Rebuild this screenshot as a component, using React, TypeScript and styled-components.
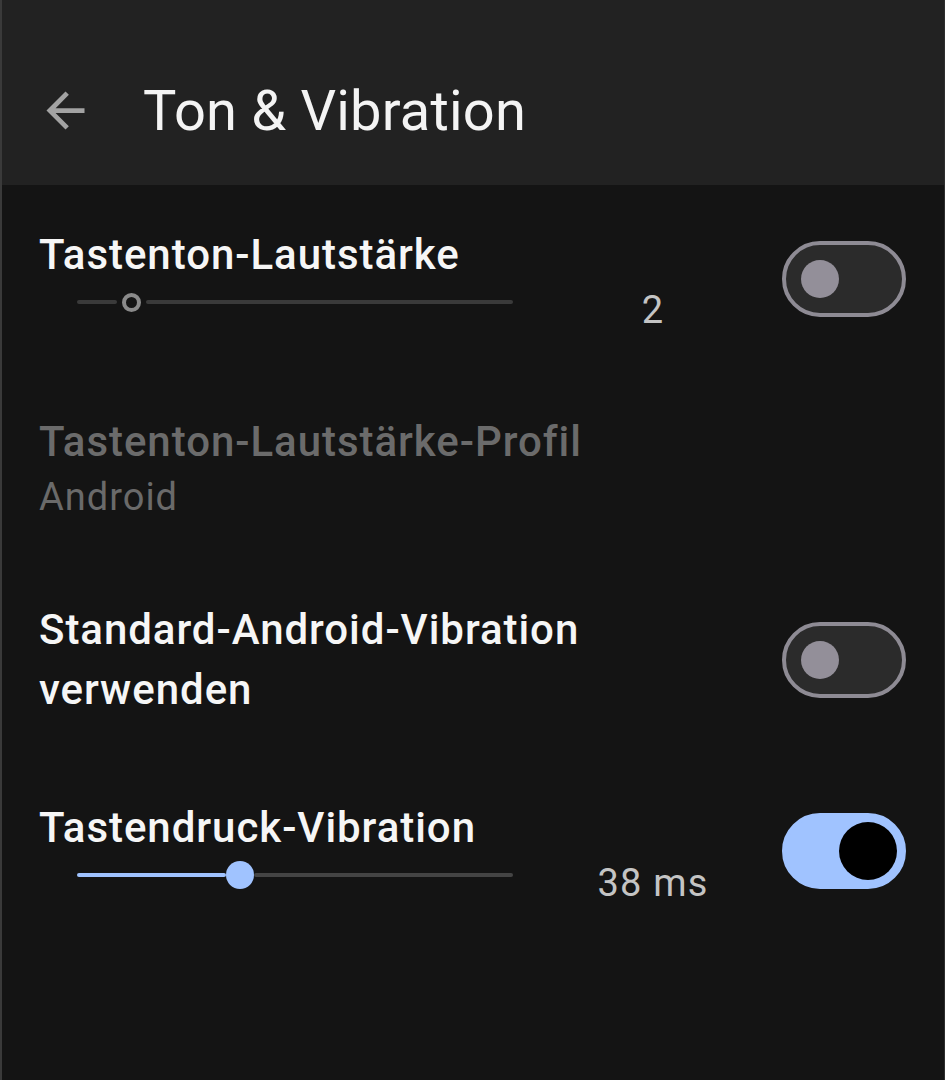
import React from 'react';
import styled, { createGlobalStyle } from 'styled-components';

const GlobalStyle = createGlobalStyle`
  html, body {
    margin: 0;
    padding: 0;
    background: #141414;
  }
  * {
    box-sizing: border-box;
  }
`;

const Screen = styled.div`
  width: 945px;
  height: 1080px;
  background: #141414;
  border-left: 2px solid #3a3a3a;
  border-right: 1px solid #2e2e2e;
  font-family: Roboto, 'Noto Sans', sans-serif;
  overflow: hidden;
`;

const Header = styled.header`
  height: 185px;
  background: #222222;
  display: flex;
  align-items: center;
  padding: 36px 0 0 35px;
  gap: 49px;
`;

const BackIcon = styled.svg`
  width: 57px;
  height: 57px;
  fill: #a3a3a3;
  flex-shrink: 0;
`;

const Title = styled.h1`
  margin: 0;
  font-size: 56px;
  font-weight: 400;
  color: #f4f4f4;
  letter-spacing: 0.2px;
`;

const List = styled.div`
  display: flex;
  flex-direction: column;
  gap: 78px;
  padding-top: 40px;
`;

const Row = styled.div<{ $center?: boolean }>`
  display: flex;
  align-items: ${p => (p.$center ? 'center' : 'flex-start')};
  padding: 0 38px 0 37px;
`;

const Body = styled.div`
  flex: 1;
  display: flex;
  flex-direction: column;
`;

const ItemTitle = styled.div<{ $disabled?: boolean }>`
  font-size: 42px;
  line-height: 60px;
  font-weight: 500;
  letter-spacing: 0.95px;
  color: ${p => (p.$disabled ? '#6b6b6b' : '#f6f6f6')};
`;

const Summary = styled.div`
  font-size: 38px;
  line-height: 50px;
  letter-spacing: 1px;
  color: #6a6a6a;
`;

const SliderRow = styled.div`
  display: flex;
  align-items: flex-start;
`;

const Track = styled.div`
  width: 436px;
  height: 34px;
  margin-left: 38px;
  display: flex;
  align-items: center;
`;

const Segment = styled.div<{ $color: string; $width?: number }>`
  height: 4px;
  border-radius: 2px;
  background: ${p => p.$color};
  ${p => (p.$width !== undefined ? `width: ${p.$width}px; flex-shrink: 0;` : 'flex: 1;')}
`;

const RingThumb = styled.div`
  width: 19px;
  height: 19px;
  border-radius: 50%;
  border: 4px solid #8a8a8a;
  margin: 0 5px;
  flex-shrink: 0;
`;

const DotThumb = styled.div`
  width: 28px;
  height: 28px;
  border-radius: 50%;
  background: #a0c3ff;
  flex-shrink: 0;
`;

const Value = styled.div`
  width: 140px;
  margin-left: 70px;
  margin-top: 1px;
  text-align: center;
  font-size: 38px;
  line-height: 48px;
  letter-spacing: 1.2px;
  color: #c4c4c4;
`;

const Switch = styled.div<{ $on?: boolean }>`
  width: 124px;
  height: 76px;
  border-radius: 38px;
  flex-shrink: 0;
  margin-top: ${p => (p.$on ? '15px' : '16px')};
  display: flex;
  align-items: center;
  justify-content: ${p => (p.$on ? 'flex-end' : 'flex-start')};
  padding: ${p => (p.$on ? '0 5px 0 0' : '0 0 0 15px')};
  background: ${p => (p.$on ? '#a0c3ff' : '#2b2b2b')};
  border: 4px solid ${p => (p.$on ? '#a0c3ff' : '#8e8b94')};
`;

const SwitchSlot = styled(Switch)`
  margin-top: 0;
`;

const Knob = styled.div<{ $on?: boolean }>`
  width: ${p => (p.$on ? '58px' : '38px')};
  height: ${p => (p.$on ? '58px' : '38px')};
  border-radius: 50%;
  background: ${p => (p.$on ? '#000000' : '#938f99')};
`;

export default function App() {
  return (
    <Screen>
      <GlobalStyle />
      <Header>
        <BackIcon viewBox="0 0 24 24">
          <path d="M20 11H7.83l5.59-5.59L12 4l-8 8 8 8 1.41-1.41L7.83 13H20v-2z" />
        </BackIcon>
        <Title>Ton &amp; Vibration</Title>
      </Header>

      <List>
        <Row>
          <Body>
            <ItemTitle>Tastenton-Lautstärke</ItemTitle>
            <SliderRow>
              <Track>
                <Segment $color="#3a3a3a" $width={40} />
                <RingThumb />
                <Segment $color="#3a3a3a" />
              </Track>
              <Value>2</Value>
            </SliderRow>
          </Body>
          <Switch>
            <Knob />
          </Switch>
        </Row>

        <Row>
          <Body>
            <ItemTitle $disabled>Tastenton-Lautstärke-Profil</ItemTitle>
            <Summary>Android</Summary>
          </Body>
        </Row>

        <Row $center>
          <Body>
            <ItemTitle>
              Standard-Android-Vibration
              <br />
              verwenden
            </ItemTitle>
          </Body>
          <SwitchSlot>
            <Knob />
          </SwitchSlot>
        </Row>

        <Row>
          <Body>
            <ItemTitle>Tastendruck-Vibration</ItemTitle>
            <SliderRow>
              <Track>
                <Segment $color="#a0c3ff" $width={149} />
                <DotThumb />
                <Segment $color="#444444" />
              </Track>
              <Value>38 ms</Value>
            </SliderRow>
          </Body>
          <Switch $on>
            <Knob $on />
          </Switch>
        </Row>
      </List>
    </Screen>
  );
}
